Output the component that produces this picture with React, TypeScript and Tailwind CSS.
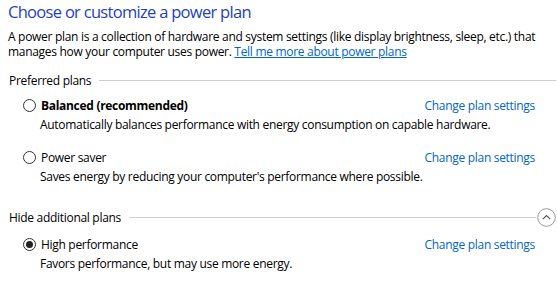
const font = { fontFamily: '"Open Sans", "Noto Sans", sans-serif' }

function Radio({ checked }: { checked?: boolean }) {
  return (
    <span className="flex h-[13px] w-[13px] shrink-0 items-center justify-center rounded-full border border-[#333]">
      {checked && <span className="h-[7px] w-[7px] rounded-full bg-[#222]" />}
    </span>
  )
}

function Plan({ name, desc, bold, checked }: { name: string; desc: string; bold?: boolean; checked?: boolean }) {
  return (
    <div className="flex flex-col">
      <div className="flex h-[20px] items-center">
        <div className="flex items-center gap-[5px] pl-[23px]">
          <Radio checked={checked} />
          <span className={bold ? 'font-bold' : ''}>{name}</span>
        </div>
        <a className="ml-auto mr-[22px] text-[#0066cc]">Change plan settings</a>
      </div>
      <div className="flex h-[19px] items-center pl-[40px]">{desc}</div>
    </div>
  )
}

function Section({ title, chevron }: { title: string; chevron?: boolean }) {
  return (
    <div className="flex h-[20px] items-center pl-[9px] pr-[1px]">
      <span>{title}</span>
      <div className="ml-[8px] h-px flex-1 bg-[#cfcfcf]" />
      {chevron && (
        <svg width="19" height="19" viewBox="0 0 19 19" className="ml-[1px]">
          <circle cx="9.5" cy="9.5" r="8.8" fill="none" stroke="#9a9a9a" strokeWidth="1" />
          <path d="M5.8 11.2 L9.5 7.5 L13.2 11.2" fill="none" stroke="#555" strokeWidth="1.2" />
        </svg>
      )}
    </div>
  )
}

export default function App() {
  return (
    <div className="h-[290px] w-[557px] overflow-hidden bg-white text-[12px] leading-[15px] tracking-[-0.3px] text-black" style={font}>
      <div className="pl-[8px] pt-[1px] text-[16.5px] leading-[22px] tracking-[-0.7px] text-[#1f3fbf]">Choose or customize a power plan</div>
      <p className="mt-[6px] px-[8px]">
        A power plan is a collection of hardware and system settings (like display brightness, sleep, etc.) that manages how your computer uses power.{' '}
        <a className="text-[#0066cc] underline">Tell me more about power plans</a>
      </p>
      <div className="mt-[11px]">
        <Section title="Preferred plans" />
      </div>
      <div className="mt-[5px]">
        <Plan name="Balanced (recommended)" bold desc="Automatically balances performance with energy consumption on capable hardware." />
      </div>
      <div className="mt-[13px]">
        <Plan name="Power saver" desc="Saves energy by reducing your computer's performance where possible." />
      </div>
      <div className="mt-[21px]">
        <Section title="Hide additional plans" chevron />
      </div>
      <div className="mt-[7px]">
        <Plan name="High performance" checked desc="Favors performance, but may use more energy." />
      </div>
    </div>
  )
}
